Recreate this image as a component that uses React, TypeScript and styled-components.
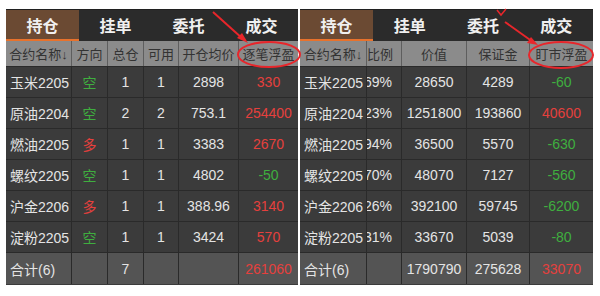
import React from 'react'
import styled, { createGlobalStyle } from 'styled-components'

const GlobalStyle = createGlobalStyle`
	body {
		margin: 0;
		background: #ffffff;
		font-family: "Liberation Sans", "Noto Sans CJK SC", sans-serif;
	}
`

type Tone = 'up' | 'down' | undefined

const tabs = ['持仓', '挂单', '委托', '成交']

const leftCols = [65, 36, 36, 35, 60, 60]
const rightCols = [66, 35, 65, 63, 64]

const leftHead = ['合约名称↓', '方向', '总仓', '可用', '开仓均价', '逐笔浮盈']
const rightHead = ['合约名称↓', '资金占比例', '价值', '保证金', '盯市浮盈']

const positions = [
	{ name: '玉米2205', dir: '空', total: '1', avail: '1', price: '2898', pnl: '330', ratio: '0.69%', value: '28650', margin: '4289', mark: '-60' },
	{ name: '原油2204', dir: '空', total: '2', avail: '2', price: '753.1', pnl: '254400', ratio: '41.23%', value: '1251800', margin: '193860', mark: '40600' },
	{ name: '燃油2205', dir: '多', total: '1', avail: '1', price: '3383', pnl: '2670', ratio: '0.94%', value: '36500', margin: '5570', mark: '-630' },
	{ name: '螺纹2205', dir: '空', total: '1', avail: '1', price: '4802', pnl: '-50', ratio: '1.70%', value: '48070', margin: '7127', mark: '-560' },
	{ name: '沪金2206', dir: '多', total: '1', avail: '1', price: '388.96', pnl: '3140', ratio: '3.26%', value: '392100', margin: '59745', mark: '-6200' },
	{ name: '淀粉2205', dir: '空', total: '1', avail: '1', price: '3424', pnl: '570', ratio: '0.31%', value: '33670', margin: '5039', mark: '-80' },
]

const tone = (v: string): Tone => (v.startsWith('-') ? 'down' : 'up')
const dirTone = (d: string): Tone => (d === '多' ? 'up' : 'down')

const Panel = ({ cols, head, rows, total }: {
	cols: number[]
	head: string[]
	rows: { text: string; tone?: Tone; clip?: boolean }[][]
	total: { text: string; tone?: Tone }[]
}) => {
	const template = cols.map((c) => `${c}px`).join(' ')
	return (
		<PanelBox $width={cols.reduce((a, b) => a + b, 0)}>
			<TabBar>
				{tabs.map((t, i) => (
					<Tab key={t} $active={i === 0}>{t}</Tab>
				))}
			</TabBar>
			<HeadRow $cols={template}>
				{head.map((h, i) => (
					<HeadCell key={h} $first={i === 0} $clip={h === '资金占比例'}>{h}</HeadCell>
				))}
			</HeadRow>
			{rows.map((r, ri) => (
				<Row key={ri} $cols={template}>
					{r.map((c, ci) => (
						<Cell key={ci} $first={ci === 0} $tone={c.tone} $clip={c.clip}>{c.text}</Cell>
					))}
				</Row>
			))}
			<TotalRow $cols={template}>
				{total.map((c, ci) => (
					<Cell key={ci} $first={ci === 0} $tone={c.tone}>{c.text}</Cell>
				))}
			</TotalRow>
		</PanelBox>
	)
}

export default function App() {
	const leftRows = positions.map((p) => [
		{ text: p.name },
		{ text: p.dir, tone: dirTone(p.dir) },
		{ text: p.total },
		{ text: p.avail },
		{ text: p.price },
		{ text: p.pnl, tone: tone(p.pnl) },
	])
	const rightRows = positions.map((p) => [
		{ text: p.name },
		{ text: p.ratio, clip: true },
		{ text: p.value },
		{ text: p.margin },
		{ text: p.mark, tone: tone(p.mark) },
	])

	return (
		<>
			<GlobalStyle />
			<Page>
				<Panel
					cols={leftCols}
					head={leftHead}
					rows={leftRows}
					total={[{ text: '合计(6)' }, { text: '' }, { text: '7' }, { text: '' }, { text: '' }, { text: '261060', tone: 'up' }]}
				/>
				<Panel
					cols={rightCols}
					head={rightHead}
					rows={rightRows}
					total={[{ text: '合计(6)' }, { text: '' }, { text: '1790790' }, { text: '275628' }, { text: '33070', tone: 'up' }]}
				/>
				<Marks width="600" height="296" viewBox="0 0 600 296">
					<g fill="none" stroke="#e8262b" strokeWidth="2">
						<ellipse cx="269" cy="54.5" rx="31" ry="12.5" />
						<ellipse cx="561" cy="55" rx="32" ry="13" />
						<line x1="213" y1="12" x2="243" y2="39" />
						<line x1="505" y1="22" x2="533" y2="42" />
						<polyline points="497,10 501,15 506,9" strokeWidth="1.5" />
					</g>
					<g fill="#e8262b">
						<polygon points="248,43 237,38 242,33" />
						<polygon points="538,45 527,43 531,37" />
					</g>
				</Marks>
			</Page>
		</>
	)
}

const Page = styled.div`
	position: relative;
	display: flex;
	gap: 2px;
	width: 600px;
	height: 296px;
	padding: 9px 0 0 6px;
	box-sizing: border-box;
`

const PanelBox = styled.div<{ $width: number }>`
	display: flex;
	flex-direction: column;
	width: ${(p) => p.$width}px;
	height: 276px;
	background: #3b3b3b;
	align-self: flex-start;
`

const TabBar = styled.div`
	display: grid;
	grid-template-columns: repeat(4, 1fr);
	height: 32px;
	background: #2b2b2b;
	border-top: 1px solid #202020;
	box-sizing: border-box;
`

const Tab = styled.div<{ $active?: boolean }>`
	display: flex;
	align-items: center;
	justify-content: center;
	font-size: 16px;
	font-weight: bold;
	color: #f0f0f0;
	background: ${(p) => (p.$active ? '#6b4a33' : 'transparent')};
	border-bottom: 2px solid ${(p) => (p.$active ? '#e8722c' : 'transparent')};
`

const HeadRow = styled.div<{ $cols: string }>`
	display: grid;
	grid-template-columns: ${(p) => p.$cols};
	height: 26px;
	background: #8b8b8b;
	border-bottom: 1px solid #2a2a2a;
	box-sizing: border-box;
`

const HeadCell = styled.div<{ $first?: boolean; $clip?: boolean }>`
	display: flex;
	align-items: center;
	justify-content: ${(p) => (p.$clip ? 'flex-end' : 'center')};
	padding-right: ${(p) => (p.$clip ? '8px' : '0')};
	overflow: hidden;
	white-space: nowrap;
	font-size: 13px;
	color: #333333;
	border-left: ${(p) => (p.$first ? 'none' : '1px solid #5e5e5e')};
`

const Row = styled.div<{ $cols: string }>`
	display: grid;
	grid-template-columns: ${(p) => p.$cols};
	height: 31px;
	border-bottom: 1px solid #2a2a2a;
	box-sizing: border-box;
`

const TotalRow = styled(Row)`
	background: #545454;
	border-bottom: none;
`

const Cell = styled.div<{ $first?: boolean; $tone?: Tone; $clip?: boolean }>`
	display: flex;
	align-items: center;
	justify-content: ${(p) => (p.$first ? 'flex-start' : p.$clip ? 'flex-end' : 'center')};
	padding-left: ${(p) => (p.$first ? '4px' : '0')};
	padding-right: ${(p) => (p.$clip ? '9px' : '0')};
	overflow: hidden;
	white-space: nowrap;
	font-size: 14px;
	color: ${(p) => (p.$tone === 'up' ? '#e5403d' : p.$tone === 'down' ? '#3fae3f' : '#e4e4e4')};
	border-left: ${(p) => (p.$first ? 'none' : '1px solid #2a2a2a')};
`

const Marks = styled.svg`
	position: absolute;
	left: 0;
	top: 0;
	pointer-events: none;
`
